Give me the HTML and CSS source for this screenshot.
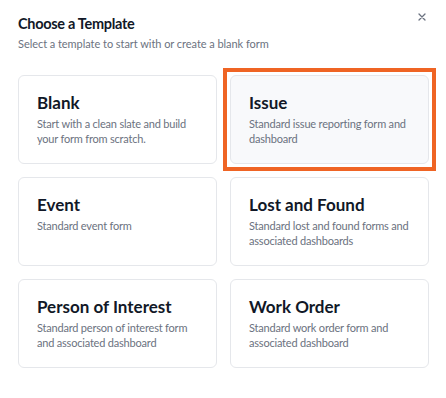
FILE: index.html
```html
<!DOCTYPE html>
<html lang="en">
<head>
  <meta charset="UTF-8">
  <title>Choose a Template</title>
  <link rel="stylesheet" href="styles.css">
</head>
<body>
  <div class="dialog">
    <div class="dialog-header">
      <div>
        <h2 class="dialog-title">Choose a Template</h2>
        <p class="dialog-subtitle">Select a template to start with or create a blank form</p>
      </div>
      <button type="button" class="close-btn" aria-label="Close">
        <svg width="8" height="8" viewBox="0 0 8 8"><path d="M1 1L7 7M7 1L1 7" stroke="currentColor" stroke-width="1.3" stroke-linecap="round"/></svg>
      </button>
    </div>

    <div class="template-grid">
      <div class="template-card">
        <div class="template-name">Blank</div>
        <div class="template-desc">Start with a clean slate and build your form from scratch.</div>
      </div>
      <div class="template-card selected">
        <div class="template-name">Issue</div>
        <div class="template-desc">Standard issue reporting form and dashboard</div>
      </div>
      <div class="template-card">
        <div class="template-name">Event</div>
        <div class="template-desc">Standard event form</div>
      </div>
      <div class="template-card">
        <div class="template-name">Lost and Found</div>
        <div class="template-desc">Standard lost and found forms and associated dashboards</div>
      </div>
      <div class="template-card">
        <div class="template-name">Person of Interest</div>
        <div class="template-desc">Standard person of interest form and associated dashboard</div>
      </div>
      <div class="template-card">
        <div class="template-name">Work Order</div>
        <div class="template-desc">Standard work order form and associated dashboard</div>
      </div>
    </div>
  </div>
</body>
</html>
```

FILE: styles.css
```css
body {
  margin: 0;
  background: #ffffff;
  font-family: Lato, "Liberation Sans", sans-serif;
  color: #111827;
}

.dialog {
  padding: 13px 17px 18px 18px;
}

.dialog-header {
  display: flex;
  justify-content: space-between;
  align-items: flex-start;
}

.dialog-title {
  margin: 0;
  font-size: 14.5px;
  font-weight: 700;
  line-height: 22px;
  letter-spacing: -0.3px;
  color: #111827;
}

.dialog-subtitle {
  margin: 1px 0 0;
  font-size: 11px;
  line-height: 16px;
  letter-spacing: -0.05px;
  color: #6b7280;
}

.close-btn {
  border: none;
  background: none;
  padding: 0;
  margin: 0 3px 0 0;
  color: #6b7280;
  display: flex;
}

.template-grid {
  display: grid;
  grid-template-columns: 1fr 1fr;
  column-gap: 13px;
  row-gap: 13px;
  margin-top: 23px;
}

.template-card {
  position: relative;
  border: 1px solid #e5e7eb;
  border-radius: 6px;
  padding: 14px 14px 17px 18px;
  background: #ffffff;
}

.template-card.selected {
  background: #f8f9fb;
}

/* selection frame */
.template-card.selected::after {
  content: "";
  position: absolute;
  top: -8px;
  left: -8px;
  right: -8px;
  bottom: -8px;
  border: 4px solid #ef6424;
}

.template-name {
  font-size: 17px;
  font-weight: 700;
  line-height: 26px;
  color: #111827;
}

.template-desc {
  font-size: 11px;
  line-height: 15px;
  letter-spacing: -0.2px;
  color: #6b7280;
}
```
